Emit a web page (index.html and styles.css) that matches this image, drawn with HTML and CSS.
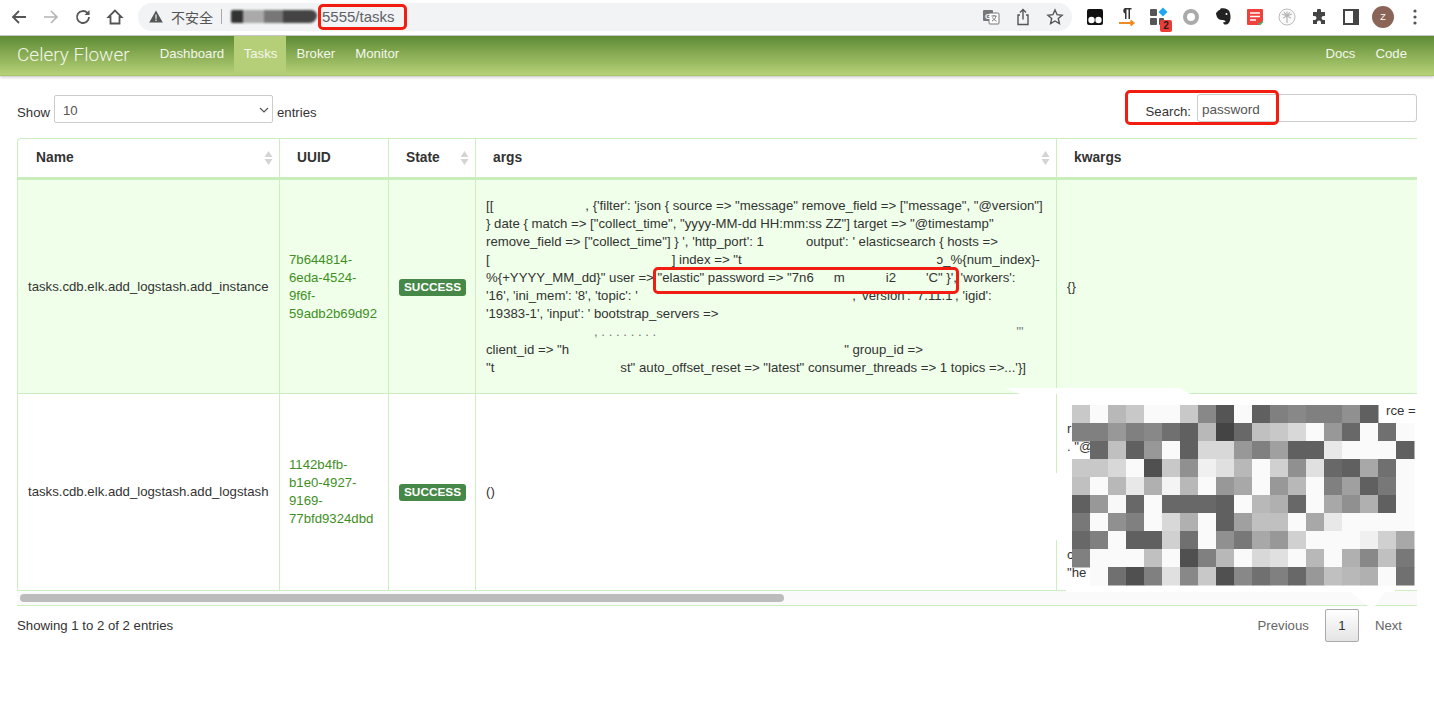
FILE: index.html
```html
<!DOCTYPE html>
<html lang="en">
<head>
    <meta charset="UTF-8">
    <meta name="viewport" content="width=device-width, initial-scale=1.0">
    <title>Celery Flower</title>
    <link rel="stylesheet" href="styles.css">
</head>
<body>
    <div class="toolbar">
        <div class="tool-btn">
            <svg width="18" height="18" viewBox="0 0 18 18"><path d="M16 9H3M9 3 3 9l6 6" class="stroke-dark"/></svg>
        </div>
        <div class="tool-btn">
            <svg width="18" height="18" viewBox="0 0 18 18"><path d="M2 9h13M9 3l6 6-6 6" class="stroke-light"/></svg>
        </div>
        <div class="tool-btn">
            <svg width="18" height="18" viewBox="0 0 18 18"><path d="M15 9a6 6 0 1 1-1.8-4.3L15 6.500" class="stroke-dark"/><path d="M15.500 2v5h-5z" class="fill-dark"/></svg>
        </div>
        <div class="tool-btn">
            <svg width="18" height="18" viewBox="0 0 18 18"><path d="M9 2.500 2.500 9H4.500v6.500h9V9h2z" class="stroke-dark"/></svg>
        </div>
        <div class="address">
            <svg class="warn" width="14" height="13" viewBox="0 0 14 13"><path d="M7 0.500 13.800 12.500H0.200z" class="fill-dark"/><path d="M6.400 4.500h1.200v4.200H6.400zM6.400 9.600h1.200v1.300H6.400z" fill="#f1f3f4"/></svg>
            <span class="not-secure">不安全</span>
            <span class="divider"></span>
            <span class="blurred-host"></span>
            <span class="url-text">5555/tasks</span>
            <span class="address-icons">
                <svg width="18" height="18" viewBox="0 0 18 18"><rect x="1" y="2" width="10" height="11" rx="1" fill="#777"/><rect x="7" y="5" width="10" height="11" rx="1" fill="#fff" stroke="#777"/><text x="3" y="10.500" class="translate-g">G</text><path d="M9.500 8h5M12 7v1M10 13c2.500-1 3.500-3 4-5M10.500 9.500c1 2 2.500 3 4 3.500" stroke="#777" fill="none"/></svg>
                <svg width="18" height="18" viewBox="0 0 18 18"><path d="M6 7H4v9.500h10V7h-2M9 11.500V1.500M6 4.500l3-3 3 3" class="stroke-thin"/></svg>
                <svg width="18" height="18" viewBox="0 0 18 18"><path d="M9 2l2.100 4.700 5 .5-3.800 3.300 1.100 5L9 13l-4.400 2.500 1.100-5L1.900 7.200l5-.5z" class="stroke-thin"/></svg>
            </span>
        </div>
        <div class="extensions">
            <div class="tool-btn">
                <svg width="18" height="18" viewBox="0 0 18 18"><path d="M1 3a2 2 0 0 1 2-2h12a2 2 0 0 1 2 2v12a2 2 0 0 1-2 2H3a2 2 0 0 1-2-2z" fill="#111"/><circle cx="5.500" cy="12" r="3.200" fill="#fff"/><circle cx="12.500" cy="12" r="3.200" fill="#fff"/></svg>
            </div>
            <div class="tool-btn">
                <svg width="18" height="20" viewBox="0 0 18 20"><path d="M7 12V6.500A3 3 0 0 1 7 1h6.500v1.500H12V12h-1.500V2.500H8.500V12z" fill="#333"/><path d="M1 16h14M12.500 13.500 15.500 16l-3 2.500" stroke="#f08a24" stroke-width="2" fill="none"/></svg>
            </div>
            <div class="tool-btn badge-host">
                <svg width="20" height="20" viewBox="0 0 20 20"><rect x="1" y="2" width="7" height="7" rx="1" fill="#555"/><rect x="1" y="11" width="7" height="7" rx="1" fill="#555"/><rect x="10" y="11" width="5" height="7" rx="1" fill="#555"/><path d="M14 0.500 18.500 5 14 9.500 9.500 5z" fill="#1ea7f2"/></svg>
                <span class="ext-badge">2</span>
            </div>
            <div class="tool-btn">
                <svg width="18" height="18" viewBox="0 0 18 18"><circle cx="9" cy="9" r="6" fill="none" stroke="#aaa" stroke-width="4"/></svg>
            </div>
            <div class="tool-btn">
                <svg width="18" height="18" viewBox="0 0 18 18"><path d="M2 5 5 2h1l.5-1.500c4-1 8 .5 9 3 1 3 1.500 6 .5 9-.5 2-2 4-4 4-2 .500-3-1-2.500-2.500 0 0 2 .5 2-.5S9.500 12 8 12c-2.500 0-4-1-5-3-.5-1.500-1-3-1-4z" fill="#222"/><circle cx="12.500" cy="6" r="1" fill="#fff"/></svg>
            </div>
            <div class="tool-btn">
                <svg width="18" height="18" viewBox="0 0 18 18"><path d="M1 2a1 1 0 0 1 1-1h14a1 1 0 0 1 1 1v11l-4 4H2a1 1 0 0 1-1-1z" fill="#f0413c"/><path d="M4 5h10M4 8.500h10M4 12h6" stroke="#fff" stroke-width="1.300"/><path d="M12.500 15l1.500 1.500 3-3" stroke="#3db16f" stroke-width="1.500" fill="none"/></svg>
            </div>
            <div class="tool-btn">
                <svg width="18" height="18" viewBox="0 0 18 18"><circle cx="9" cy="9" r="8" fill="#fafafa" stroke="#bbb"/><path d="M9 8v7M9 8 4 6M9 8l5-2M9 8 5 10M9 8l4 2M9 8V3.500M9 8 6 4M9 8l3-4" stroke="#b5b5b5" stroke-width="1.200"/></svg>
            </div>
            <div class="tool-btn">
                <svg width="16" height="16" viewBox="0 0 16 16"><path d="M6 1.500a2 2 0 0 1 4 0V3h4v4h-1.500a2 2 0 0 0 0 4H14v4h-4v-1.500a2 2 0 0 0-4 0V15H2v-4h1.500a2 2 0 0 0 0-4H2V3h4z" fill="#444"/></svg>
            </div>
            <div class="tool-btn">
                <svg width="16" height="16" viewBox="0 0 16 16"><path d="M1 1h14v14H1z" fill="#fff" stroke="#444" stroke-width="2"/><path d="M10 1h5v14h-5z" fill="#444"/></svg>
            </div>
            <div class="tool-btn"><span class="avatar">Z</span></div>
            <div class="tool-btn">
                <svg width="4" height="16" viewBox="0 0 4 16"><circle cx="2" cy="2" r="1.600" fill="#555"/><circle cx="2" cy="8" r="1.600" fill="#555"/><circle cx="2" cy="14" r="1.600" fill="#555"/></svg>
            </div>
        </div>
    </div>

    <nav class="navbar">
        <a class="brand">Celery Flower</a>
        <a class="nav-link">Dashboard</a>
        <a class="nav-link active">Tasks</a>
        <a class="nav-link">Broker</a>
        <a class="nav-link">Monitor</a>
        <span class="nav-spacer"></span>
        <a class="nav-link">Docs</a>
        <a class="nav-link">Code</a>
    </nav>

    <main class="content">
        <div class="controls">
            <label class="length-label">Show
                <span class="select-box">10
                    <svg width="10" height="6" viewBox="0 0 10 6"><path d="M1 1l4 4 4-4" fill="none" stroke="#555" stroke-width="1.200"/></svg>
                </span>
                entries</label>
            <label class="search-label">Search: <input class="search-input" type="text" value="password"></label>
        </div>

        <div class="table-wrap">
            <table class="tasks">
                <colgroup>
                    <col class="col-name"><col class="col-uuid"><col class="col-state"><col class="col-args"><col class="col-kwargs">
                </colgroup>
                <thead>
                    <tr>
                        <th>Name<svg class="sort" width="9" height="14" viewBox="0 0 8 14"><path d="M4 0l4 6H0zM4 14l4-6H0z"/></svg></th>
                        <th>UUID</th>
                        <th>State<svg class="sort" width="9" height="14" viewBox="0 0 8 14"><path d="M4 0l4 6H0zM4 14l4-6H0z"/></svg></th>
                        <th>args<svg class="sort" width="9" height="14" viewBox="0 0 8 14"><path d="M4 0l4 6H0zM4 14l4-6H0z"/></svg></th>
                        <th>kwargs</th>
                    </tr>
                </thead>
                <tbody>
                    <tr class="row-odd">
                        <td>tasks.cdb.elk.add_logstash.add_instance</td>
                        <td class="uuid-cell"><a class="uuid">7b644814-<br>6eda-4524-<br>9f6f-<br>59adb2b69d92</a></td>
                        <td><span class="state-badge">SUCCESS</span></td>
                        <td class="args-cell">
                            <div class="line">[[<span class="gap gap-92"></span>, {'filter': 'json { source =&gt; "message" remove_field =&gt; ["message", "@version"]</div>
                            <div class="line">} date { match =&gt; ["collect_time", "yyyy-MM-dd HH:mm:ss ZZ"] target =&gt; "@timestamp"</div>
                            <div class="line">remove_field =&gt; ["collect_time"] } ', 'http_port': 1<span class="gap gap-42"></span>output': ' elasticsearch { hosts =&gt;</div>
                            <div class="line">[<span class="gap gap-182"></span>] index =&gt; "t<span class="gap gap-195"></span>ɔ_%{num_index}-</div>
                            <div class="line">%{+YYYY_MM_dd}" user =&gt; "elastic" password =&gt; "7n6<span class="gap gap-20"></span>m<span class="gap gap-41"></span>i2<span class="gap gap-30"></span>'C" }', 'workers':</div>
                            <div class="line">'16', 'ini_mem': '8', 'topic': '<span class="gap gap-212"></span>', 'version': '7.11.1', 'igid':</div>
                            <div class="line">'19383-1', 'input': ' bootstrap_servers =&gt;</div>
                            <div class="line line-cut"><span class="gap gap-108"></span>, . . . . . . . .<span class="gap gap-360"></span>'"</div>
                            <div class="line">client_id =&gt; "h<span class="gap gap-275"></span>" group_id =&gt;</div>
                            <div class="line">"t<span class="gap gap-126"></span>st" auto_offset_reset =&gt; "latest" consumer_threads =&gt; 1 topics =&gt;...'}]</div>
                        </td>
                        <td class="mid">{}</td>
                    </tr>
                    <tr>
                        <td>tasks.cdb.elk.add_logstash.add_logstash</td>
                        <td class="uuid-cell"><a class="uuid">1142b4fb-<br>b1e0-4927-<br>9169-<br>77bfd9324dbd</a></td>
                        <td><span class="state-badge">SUCCESS</span></td>
                        <td>()</td>
                        <td class="kwargs-cell">
                            <div class="line line-end">rce =</div>
                            <div class="line">r</div>
                            <div class="line">. "@"</div>
                            <div class="line">&nbsp;</div>
                            <div class="line">&nbsp;</div>
                            <div class="line">&nbsp;</div>
                            <div class="line">&nbsp;</div>
                            <div class="line">&nbsp;</div>
                            <div class="line">c</div>
                            <div class="line">"he</div>
                        </td>
                    </tr>
                </tbody>
            </table>
            <div class="scrollbar"><div class="scroll-thumb"></div></div>
        </div>

        <div class="table-foot">
            <span>Showing 1 to 2 of 2 entries</span>
            <div class="pager">
                <a class="page-link">Previous</a>
                <a class="page-current">1</a>
                <a class="page-link">Next</a>
            </div>
        </div>
    </main>

    <!-- annotations and redactions painted on top of the screenshot -->
    <svg id="redaction" class="redaction" width="434" height="225" viewBox="1000 385 434 225"></svg>
    <div class="mark mark-url"></div>
    <div class="mark mark-search"></div>
    <div class="mark mark-args"></div>

    <script src="mosaic.js"></script>
</body>
</html>
```

FILE: styles.css
```css
* {
    box-sizing: border-box;
}
html, body {
    margin: 0;
    padding: 0;
}
body {
    position: relative;
    width: 1434px;
    height: 702px;
    overflow: hidden;
    background-color: #fff;
    font-family: "Liberation Sans", Arial, sans-serif;
    font-size: 13.2px;
    color: #333;
}

/* browser bar */
.toolbar {
    display: flex;
    align-items: center;
    height: 36px;
    padding: 0 3px 2px;
    background-color: #fff;
    border-bottom: 1px solid #d0d0d0;
}
.tool-btn {
    position: relative;
    display: flex;
    align-items: center;
    justify-content: center;
    width: 32px;
    height: 32px;
    flex: none;
}
.stroke-dark {
    fill: none;
    stroke: #555;
    stroke-width: 1.8;
}
.stroke-light {
    fill: none;
    stroke: #b4b4b4;
    stroke-width: 1.6;
}
.stroke-thin {
    fill: none;
    stroke: #555;
    stroke-width: 1.4;
}
.fill-dark {
    fill: #555;
}
.translate-g {
    font-size: 8px;
    font-weight: bold;
    fill: #fff;
}
.address {
    display: flex;
    align-items: center;
    width: 934px;
    height: 28px;
    margin-left: 7px;
    padding-left: 11px;
    background-color: #f1f3f4;
    border-radius: 14px;
    font-size: 15px;
    color: #555;
}
.warn {
    flex: none;
}
.not-secure {
    margin-left: 8px;
    font-family: "Noto Sans CJK SC", "Liberation Sans", sans-serif;
    font-size: 14px;
}
.divider {
    width: 1px;
    height: 15px;
    margin-left: 8px;
    background-color: #aaa;
}
.blurred-host {
    width: 86px;
    height: 13px;
    margin-left: 9px;
    margin-right: 5px;
    background: linear-gradient(90deg, #333 0 14%, #aaa 14% 38%, #777 38% 60%, #444 60% 100%);
    filter: blur(1px);
    border-radius: 2px 6px 8px 2px;
}
.url-text {
    color: #5f6368;
}
.address-icons {
    display: flex;
    gap: 14px;
    margin-left: auto;
    margin-right: 8px;
}
.extensions {
    display: flex;
    margin-left: 7px;
}
.ext-badge {
    position: absolute;
    right: 3px;
    bottom: 1px;
    width: 12px;
    height: 12px;
    background-color: #ee3b36;
    border-radius: 2px;
    font-size: 10px;
    font-weight: bold;
    line-height: 12px;
    text-align: center;
    color: #222;
}
.avatar {
    display: block;
    width: 22px;
    height: 22px;
    background-color: #8a6557;
    border-radius: 50%;
    font-size: 9px;
    line-height: 22px;
    text-align: center;
    color: #fff;
}

/* flower navbar */
.navbar {
    display: flex;
    align-items: stretch;
    height: 40px;
    padding: 0 17px 0 17px;
    background-image: linear-gradient(#5e8b35, #b6d177);
    border-bottom: 1px solid #a9c36c;
    box-shadow: 0 1px 3px rgba(0, 0, 0, 0.25);
}
.brand {
    margin-right: 20px;
    font-family: Roboto, "Liberation Sans", sans-serif;
    font-size: 19px;
    font-weight: 300;
    line-height: 37px;
    color: #f2f6e8;
}
.nav-link {
    padding: 0 10px;
    line-height: 36px;
    color: #f4f7ec;
}
.nav-link.active {
    padding: 0 9px 0 9.500px;
    background-color: #b4cf78;
}
.nav-spacer {
    flex: 1;
}

.content {
    padding: 19px 17px 0;
}
.controls {
    display: flex;
    justify-content: space-between;
    height: 43px;
}
.length-label {
    display: flex;
    gap: 4px;
    align-items: flex-end;
    height: 29px;
    padding-bottom: 4px;
}
.select-box {
    display: flex;
    align-items: center;
    justify-content: space-between;
    width: 219px;
    height: 28px;
    margin-bottom: -3px;
    padding: 2px 3px 0 8px;
    border: 1px solid #ccc;
    border-radius: 2px;
    color: #555;
}
.search-label {
    display: flex;
    gap: 6px;
    align-items: flex-end;
    height: 28px;
    margin-top: -1px;
    padding-bottom: 3px;
}
.search-input {
    width: 220px;
    height: 28px;
    margin-bottom: -3px;
    padding: 2px 4px 0;
    border: 1px solid #ccc;
    border-radius: 3px;
    font-family: inherit;
    font-size: 13.500px;
    color: #555;
}

/* tasks table */
.table-wrap {
    width: 1400px;
    overflow: hidden;
    border-bottom: 1px solid #cdeec0;
}
.tasks {
    width: 1430px;
    table-layout: fixed;
    border-collapse: separate;
    border-spacing: 0;
}
.col-name { width: 262px; }
.col-uuid { width: 109px; }
.col-state { width: 87px; }
.col-args { width: 581px; }
.col-kwargs { width: 391px; }
.tasks th {
    position: relative;
    height: 42px;
    padding: 0 0 1px 17px;
    border-top: 1px solid #cdeec0;
    border-left: 1px solid #cdeec0;
    border-bottom: 3px solid #c9edbb;
    background-color: #fff;
    font-size: 13.800px;
    font-weight: bold;
    text-align: left;
}
.tasks th:first-child {
    padding-left: 18px;
    border-top-left-radius: 4px;
}
.sort {
    position: absolute;
    top: 12px;
    right: 6px;
    fill: #d4d4d4;
}
.tasks td {
    padding: 0 10px;
    border-left: 1px solid #cdeec0;
    border-bottom: 1px solid #cdeec0;
    line-height: 18px;
    vertical-align: middle;
}
.row-odd td {
    height: 214px;
    background-color: #efffea;
}
.tasks tbody tr:last-child td {
    height: 197px;
}
.tasks .uuid-cell {
    padding-left: 9px;
}
.uuid {
    color: #3f8f1f;
}
.state-badge {
    display: inline-block;
    height: 17px;
    padding: 0 5px;
    background-color: #468847;
    border-radius: 3px;
    font-size: 11.800px;
    font-weight: bold;
    line-height: 17px;
    color: #fff;
}
.line {
    height: 18px;
    white-space: nowrap;
}
.gap {
    display: inline-block;
}
.gap-20 { width: 20px; }
.gap-30 { width: 30px; }
.gap-41 { width: 41px; }
.gap-42 { width: 42px; }
.gap-92 { width: 92px; }
.gap-108 { width: 108px; }
.gap-126 { width: 126px; }
.gap-182 { width: 182px; }
.gap-195 { width: 195px; }
.gap-212 { width: 212px; }
.gap-275 { width: 275px; }
.gap-360 { width: 360px; }
.line-cut {
    color: #777;
}
.line-end {
    padding-left: 319px;
}
.scrollbar {
    height: 14px;
    padding: 3px;
    background-color: #fafafa;
}
.scroll-thumb {
    width: 764px;
    height: 8px;
    background-color: #bcbcbc;
    border-radius: 4px;
}

.table-foot {
    display: flex;
    justify-content: space-between;
    padding-top: 3px;
}
.table-foot > span {
    margin-top: 9px;
}
.pager {
    display: flex;
    align-items: center;
    margin-right: 15px;
}
.page-link {
    color: #666;
}
.page-current {
    width: 34px;
    height: 33px;
    margin: 0 16px 0 16px;
    background-image: linear-gradient(#fff, #e4e4e4);
    border: 1px solid #aaa;
    border-radius: 2px;
    line-height: 31px;
    text-align: center;
    color: #333;
}

/* overlays */
.redaction {
    position: absolute;
    top: 385px;
    left: 1000px;
}
.mark {
    position: absolute;
    border: 3px solid #f01d10;
    border-radius: 5px;
}
.mark-url {
    top: 4px;
    left: 318px;
    width: 89px;
    height: 26px;
}
.mark-search {
    top: 90px;
    left: 1125px;
    width: 154px;
    height: 35px;
}
.mark-args {
    top: 267px;
    left: 653px;
    width: 306px;
    height: 27px;
}
```

FILE: mosaic.js
```js
// grey levels of the pixelated block over the kwargs cell, one hex pair per cell
const rows = [
    'c8 fa b8 c8 fa fa c8 88 55 fa 60 80 88 80 80 90 60 -- --',
    '80 80 98 80 88 70 60 b8 44 68 c0 c8 d8 fa 98 68 fa 70 fa',
    '-- 68 c0 60 98 fa 60 d8 d8 98 80 a0 60 60 e8 fa fa fa 60',
    'c8 c8 d8 fa 50 c8 90 f0 e0 b8 fa d0 90 e0 68 60 a8 70 fa',
    'c0 fa b8 e8 b0 f4 b8 fa 98 a8 fa 98 b8 fa 80 a0 60 78 fa',
    '60 98 f8 68 fa 68 68 68 60 fa b8 b0 68 fa a8 90 b0 60 fa',
    '78 fa 90 80 fa d8 b0 fa 60 a0 c0 c0 fa a8 e8 fa fa fa fa',
    '68 80 fa 60 60 d0 70 fa 90 78 a8 98 d0 fa fa fa f0 d0 a8',
    '80 fa fa fa c0 fa 50 80 b8 fa d8 e0 fa b8 fa b0 88 c0 78',
    '-- fa 70 50 80 e0 88 c8 50 88 70 80 68 98 c0 b8 b0 fa 70'
];
// white brush strokes around it
const patches = [
    '1005,388 1180,388 1190,394 1020,394',
    '1050,473 1068,473 1068,540 1050,540',
    '1066,590 1370,586 1395,590 1395,592 1066,592',
    '1350,592 1385,592 1375,606 1368,606'
];

let svg = '';
patches.forEach(p => {
    svg += `<polygon points="${p}" fill="#fff"/>`;
});
rows.forEach((row, y) => {
    row.split(' ').forEach((g, x) => {
        if (g === '--') return;
        svg += `<rect x="${1072 + x * 18}" y="${405 + y * 18}" width="18.500" height="18.500" fill="#${g}${g}${g}"/>`;
    });
});
document.getElementById('redaction').innerHTML = svg;
```
